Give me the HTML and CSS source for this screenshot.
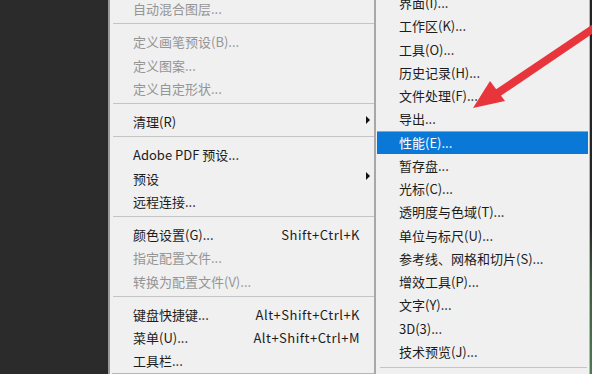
FILE: index.html
```html
<!DOCTYPE html>
<html lang="zh">
<head>
<meta charset="utf-8">
<link rel="stylesheet" href="styles.css">
</head>
<body>
<div class="screen">
  <div class="dark-left"></div>
  <div class="edge"></div>
  <div class="menu main">
    <div class="list">
      <div class="item off">自动混合图层...</div>
      <div class="sep"></div>
      <div class="item off">定义画笔预设(B)...</div>
      <div class="item off">定义图案...</div>
      <div class="item off">定义自定形状...</div>
      <div class="sep"></div>
      <div class="item">清理(R)<span class="tri"></span></div>
      <div class="sep"></div>
      <div class="item">Adobe PDF 预设...</div>
      <div class="item">预设<span class="tri"></span></div>
      <div class="item">远程连接...</div>
      <div class="sep"></div>
      <div class="item">颜色设置(G)...<span class="key">Shift+Ctrl+K</span></div>
      <div class="item off">指定配置文件...</div>
      <div class="item off">转换为配置文件(V)...</div>
      <div class="sep"></div>
      <div class="item">键盘快捷键...<span class="key">Alt+Shift+Ctrl+K</span></div>
      <div class="item">菜单(U)...<span class="key">Alt+Shift+Ctrl+M</span></div>
      <div class="item">工具栏...</div>
      <div class="item open"></div>
    </div>
  </div>
  <div class="menu sub">
    <div class="list">
      <div class="item">界面(I)...</div>
      <div class="item">工作区(K)...</div>
      <div class="item">工具(O)...</div>
      <div class="item">历史记录(H)...</div>
      <div class="item">文件处理(F)...</div>
      <div class="item">导出...</div>
      <div class="item hl">性能(E)...</div>
      <div class="item">暂存盘...</div>
      <div class="item">光标(C)...</div>
      <div class="item">透明度与色域(T)...</div>
      <div class="item">单位与标尺(U)...</div>
      <div class="item">参考线、网格和切片(S)...</div>
      <div class="item">增效工具(P)...</div>
      <div class="item">文字(Y)...</div>
      <div class="item">3D(3)...</div>
      <div class="item">技术预览(J)...</div>
      <div class="sep"></div>
    </div>
  </div>
  <div class="dark-right"></div>
  <svg class="arrow" width="592" height="374" viewBox="0 0 592 374">
    <polygon points="596,22 598,30 499,97 495,90" fill="#e8353b"/>
    <polygon points="473,108 490,81 505,101" fill="#e8353b"/>
  </svg>
</div>
</body>
</html>
```
FILE: styles.css
```css
html, body {
  margin: 0;
  padding: 0;
}
body {
  width: 592px;
  height: 374px;
  overflow: hidden;
  font-family: "Noto Sans CJK SC", "Noto Sans", sans-serif;
  font-size: 13px;
  color: #1c1c1c;
}
.screen {
  position: relative;
  display: flex;
  width: 592px;
  height: 374px;
  overflow: hidden;
  background: #2b2b2b;
}
.dark-left {
  width: 108px;
  background: #2b2b2b;
}
.edge {
  width: 2px;
  background: #9a9a9a;
}
.menu {
  background: #f0f0f0;
  overflow: hidden;
}
.main {
  width: 264px;
  border-right: 1px solid #a8a8a8;
}
.main .list {
  margin-top: -3px;
}
.sub {
  width: 211px;
  border-left: 1px solid #a8a8a8;
  border-right: 1px solid #b4b4b4;
  padding: 0 1px;
}
.sub .list {
  margin-top: -9px;
}
.dark-right {
  flex: 1;
  background: linear-gradient(#232323 0%, #262626 60%, #3d5a3f 75%, #4f7a52 100%);
}
.item {
  display: flex;
  align-items: center;
  height: 23.25px;
  padding-left: 23px;
  white-space: nowrap;
  box-sizing: border-box;
}
.sub .item {
  padding-left: 22px;
}
.item.off {
  color: #959595;
}
.item.hl {
  background: #0a78d7;
  color: #ffffff;
  border-top: 1px solid #5fb0ee;
}
.item.open {
  background: #86c3ee;
  margin-left: 2px;
}
.key {
  margin-left: auto;
  padding-right: 14px;
  letter-spacing: 0.5px;
}
.tri {
  margin-left: auto;
  margin-right: 4px;
  width: 0;
  height: 0;
  border-top: 4px solid transparent;
  border-bottom: 4px solid transparent;
  border-left: 4px solid #111;
  position: relative;
  top: -2px;
}
.sep {
  height: 1px;
  margin: 3px 0 6px 3px;
  background: #c4c4c4;
}
.sub .sep {
  margin: 4px 1px 5px 3px;
}
.arrow {
  position: absolute;
  left: 0;
  top: 0;
  pointer-events: none;
}
```
